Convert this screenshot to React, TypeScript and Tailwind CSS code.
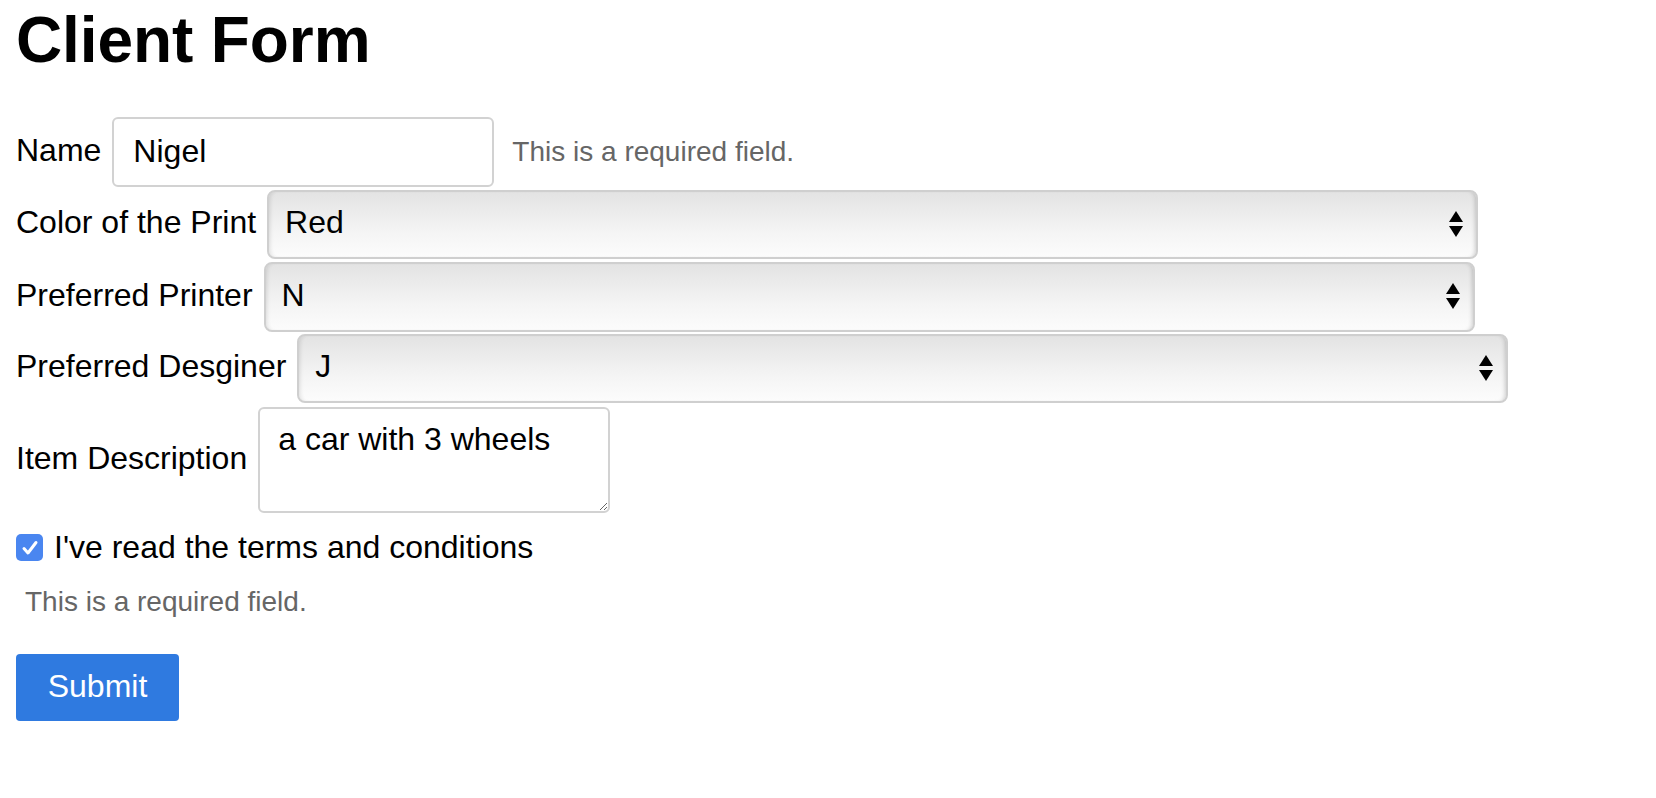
import React from "react";

function Arrows() {
  return (
    <svg
      className="pointer-events-none absolute right-[15px] top-1/2 -translate-y-1/2"
      width="14"
      height="28"
      viewBox="0 0 14 28"
    >
      <polygon points="7,0 14,11 0,11" fill="#000" />
      <polygon points="0,15 14,15 7,26" fill="#000" />
    </svg>
  );
}

function FakeSelect({ value, options, h }: { value: string; options: string[]; h: string }) {
  return (
    <div className={`relative w-[1211px] ${h}`}>
      <select
        defaultValue={value}
        className="h-full w-full appearance-none rounded-[8px] border-2 border-[#cfcfcf] bg-[linear-gradient(to_bottom,#e3e3e3,#f4f4f4_60%,#fcfcfc)] pl-[16px] pb-[5px] text-[32px] text-black shadow-[inset_-4px_0_4px_-3px_rgba(0,0,0,0.18),inset_4px_0_4px_-3px_rgba(0,0,0,0.12)] outline-none"
      >
        {options.map((o) => (
          <option key={o} value={o}>
            {o}
          </option>
        ))}
      </select>
      <Arrows />
    </div>
  );
}

export default function App() {
  return (
    <div className="min-h-[798px] bg-white pl-[16px] font-['Liberation_Sans',Arial,sans-serif] text-black">
      <h1 className="mt-0 pt-[8px] text-[64px] font-bold leading-[64px] tracking-[-0.1px]">Client Form</h1>

      <div className="mt-[45px] flex h-[70px] items-center gap-[11px]">
        <label className="pb-[4px] text-[32px]">Name</label>
        <input
          defaultValue="Nigel"
          className="h-[70px] w-[382px] rounded-[6px] border-2 border-[#d2d2d2] px-[19px] pb-[2px] text-[32px] text-black outline-none"
        />
        <span className="ml-[7px] text-[28px] text-[#666]">This is a required field.</span>
      </div>

      <div className="mt-[3px] flex h-[69px] items-center gap-[11px]">
        <label className="pb-[5px] text-[32px]">Color of the Print</label>
        <FakeSelect value="Red" options={["Red", "Blue", "Green"]} h="h-[69px]" />
      </div>

      <div className="mt-[3px] flex h-[70px] items-center gap-[11px]">
        <label className="pb-[5px] text-[32px]">Preferred Printer</label>
        <FakeSelect value="N" options={["N", "M", "O"]} h="h-[70px]" />
      </div>

      <div className="mt-[2px] flex h-[69px] items-center gap-[11px]">
        <label className="pb-[5px] text-[32px]">Preferred Desginer</label>
        <FakeSelect value="J" options={["J", "K", "L"]} h="h-[69px]" />
      </div>

      <div className="mt-[4px] flex h-[106px] items-center gap-[11px]">
        <label className="pb-[5px] text-[32px]">Item Description</label>
        <textarea
          defaultValue="a car with 3 wheels"
          className="h-[106px] w-[352px] rounded-[6px] border-2 border-[#d2d2d2] px-[18px] pt-[12px] text-[32px] leading-[37px] text-black outline-none"
        />
      </div>

      <div className="mt-[21px] flex h-[27px] items-center gap-[11px]">
        <span className="flex h-[27px] w-[27px] shrink-0 items-center justify-center rounded-[5px] bg-[#4a86f0]">
          <svg width="20" height="20" viewBox="0 0 20 20">
            <path d="M4 10.5 L8 15 L16 4.5" fill="none" stroke="#fff" strokeWidth="3" strokeLinecap="round" strokeLinejoin="round" />
          </svg>
        </span>
        <span className="pb-[2px] text-[32px]">I've read the terms and conditions</span>
      </div>

      <div className="mt-[25px] pl-[9px] text-[28px] leading-[32px] text-[#666]">This is a required field.</div>

      <button className="mt-[36px] h-[67px] w-[163px] rounded-[4px] bg-[#2f7ae0] pb-[3px] text-[32px] text-white">
        Submit
      </button>
    </div>
  );
}
